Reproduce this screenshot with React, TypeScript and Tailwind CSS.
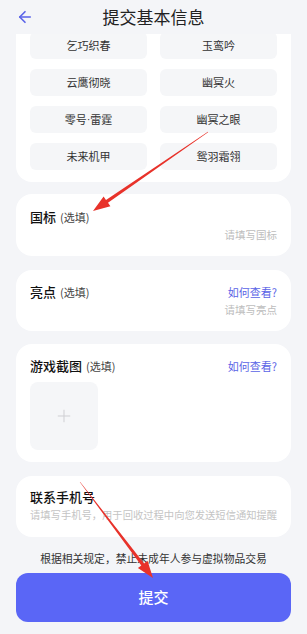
import { ArrowLeft, Plus } from "lucide-react";

const skins = [
  ["乞巧织春", "玉鸾吟"],
  ["云鹰彻晓", "幽冥火"],
  ["零号·雷霆", "幽冥之眼"],
  ["未来机甲", "鸳羽霜翎"]
];

// builds a tapered arrow outline from tail to tip
function arrowPoints(
  tx: number,
  ty: number,
  hx: number,
  hy: number,
  tailW: number,
  shaftW: number,
  headL: number,
  headW: number
) {
  const len = Math.hypot(hx - tx, hy - ty);
  const ux = (hx - tx) / len;
  const uy = (hy - ty) / len;
  const nx = -uy;
  const ny = ux;
  const bx = hx - ux * headL;
  const by = hy - uy * headL;
  const pts = [
    [tx + (nx * tailW) / 2, ty + (ny * tailW) / 2],
    [bx + (nx * shaftW) / 2, by + (ny * shaftW) / 2],
    [bx + (nx * headW) / 2, by + (ny * headW) / 2],
    [hx, hy],
    [bx - (nx * headW) / 2, by - (ny * headW) / 2],
    [bx - (nx * shaftW) / 2, by - (ny * shaftW) / 2],
    [tx - (nx * tailW) / 2, ty - (ny * tailW) / 2]
  ];
  return pts.map((p) => p.map((v) => v.toFixed(1)).join(",")).join(" ");
}

function SkinName({ name }: { name: string }) {
  const parts = name.split("·");
  if (parts.length === 1) return <>{name}</>;
  return (
    <>
      {parts[0]}
      <span className="font-['Liberation_Sans',sans-serif]">·</span>
      {parts[1]}
    </>
  );
}

function Label({ title, optional }: { title: string; optional?: boolean }) {
  return (
    <div className="text-[13px] leading-[20px] font-medium text-[#111]">
      {title}
      {optional && (
        <span className="ml-1 text-[11px] font-normal text-[#444]">(选填)</span>
      )}
    </div>
  );
}

function HowLink() {
  return <span className="text-[11px] leading-[20px] text-[#5a63e6]">如何查看?</span>;
}

export default function App() {
  return (
    <div className="relative w-full min-h-[634px] bg-[#f4f5f8] font-['Noto_Sans_CJK_SC',sans-serif] flex flex-col">
      <div className="h-[34px] grid grid-cols-[48px_1fr_48px] items-center">
        <div className="pl-[16px] text-[#5a63e8]">
          <ArrowLeft size={18} strokeWidth={2.2} />
        </div>
        <div className="text-center text-[17px] text-[#222]">提交基本信息</div>
        <div />
      </div>

      <div className="px-4 flex flex-col">
        <div className="overflow-hidden">
          <div className="-mt-[16px] bg-white rounded-2xl px-[14px] pt-[14px] pb-[12px] grid grid-cols-2 gap-x-[13px] gap-y-[10px]">
            {skins.flat().map((name) => (
              <div
                key={name}
                className="h-[27px] rounded-md bg-[#f5f6f8] flex items-center justify-center text-[11px] text-[#333]"
              >
                <SkinName name={name} />
              </div>
            ))}
          </div>
        </div>

        <div className="mt-[12px] bg-white rounded-2xl px-[14px] pt-[13px] pb-[13px]">
          <Label title="国标" optional />
          <div className="text-right text-[10.5px] leading-[16px] text-[#bdbdbd]">请填写国标</div>
        </div>

        <div className="mt-[14px] bg-white rounded-2xl px-[14px] pt-[12px] pb-[13px]">
          <div className="flex justify-between items-center">
            <Label title="亮点" optional />
            <HowLink />
          </div>
          <div className="text-right text-[10.5px] leading-[16px] text-[#bdbdbd]">请填写亮点</div>
        </div>

        <div className="mt-[13px] bg-white rounded-2xl px-[14px] pt-[12px] pb-[12px]">
          <div className="flex justify-between items-center">
            <Label title="游戏截图" optional />
            <HowLink />
          </div>
          <div className="mt-[6px] w-[68px] h-[68px] rounded-lg bg-[#f5f6f8] flex items-center justify-center text-[#cfcfd3]">
            <Plus size={20} strokeWidth={1.2} />
          </div>
        </div>

        <div className="mt-[14px] bg-white rounded-2xl px-[14px] pt-[11px] pb-[14px]">
          <Label title="联系手机号" />
          <div className="text-right text-[10.3px] leading-[16px] text-[#c4c4c4] whitespace-nowrap">
            请填写手机号，用于回收过程中向您发送短信通知提醒
          </div>
        </div>

        <div className="mt-[13px] text-center text-[10.8px] leading-[16px] text-[#333]">
          根据相关规定，禁止未成年人参与虚拟物品交易
        </div>

        <button className="mt-[7px] h-[49px] rounded-xl bg-[#5a66f6] text-white text-[15px] font-medium">
          提交
        </button>
      </div>

      <svg className="absolute inset-0 pointer-events-none" width="307" height="634">
        <polygon points={arrowPoints(208, 132, 93, 211, 0.4, 3.5, 17, 12)} fill="#e8322a" />
        <polygon points={arrowPoints(80, 482, 153, 578, 0.4, 3.5, 17, 12)} fill="#e8322a" />
      </svg>
    </div>
  );
}
